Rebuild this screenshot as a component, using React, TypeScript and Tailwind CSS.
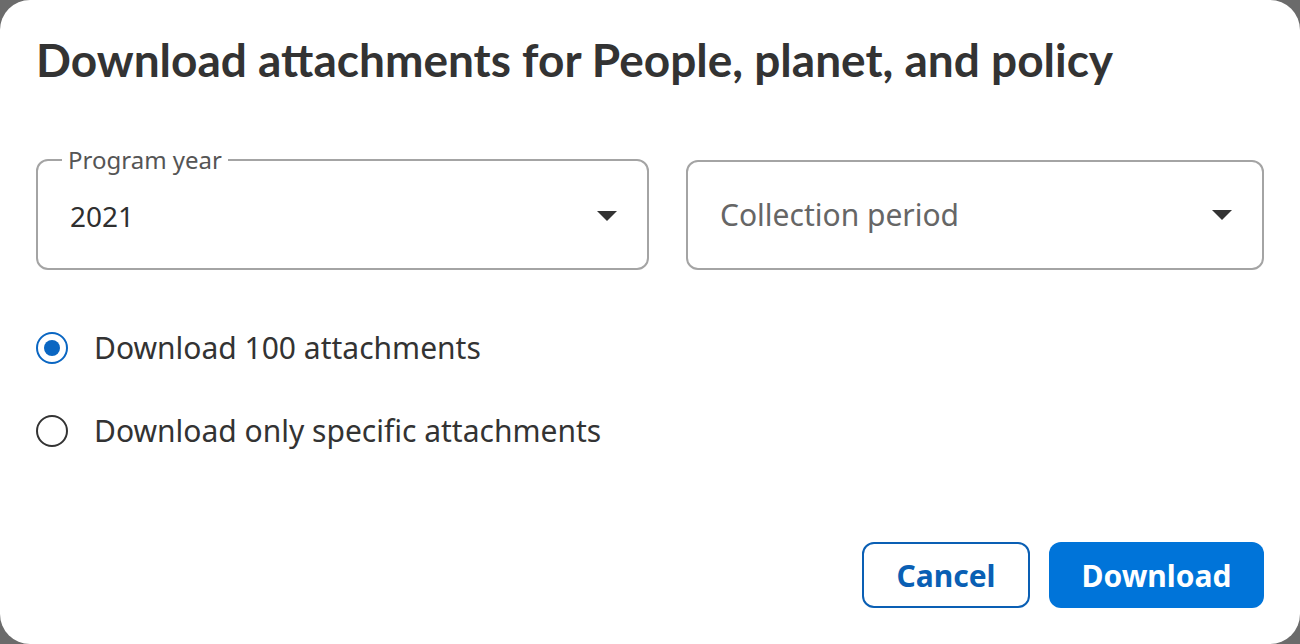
import { useState } from "react";

const font = { fontFamily: "'Noto Sans', Lato, sans-serif" };

function Caret() {
  return (
    <svg width="20" height="10" viewBox="0 0 20 10" className="shrink-0">
      <path d="M0 0 L20 0 L10 10 Z" fill="#333" />
    </svg>
  );
}

function SelectBox({ label, value, placeholder, width }: { label?: string; value?: string; placeholder?: string; width: string }) {
  // with a label the fieldset grows by half the legend above the border line
  const shift = label ? "-mt-[8px]" : "";
  return (
    <fieldset
      className={`${width} ${label ? "h-[122px] -mt-[12px]" : "h-[110px]"} border-2 border-[#a4a4a4] rounded-[12px] pl-[32px] pr-[30px] flex items-center justify-between`}
    >
      {label && <legend className="px-[6px] -ml-[8px] text-[24px] leading-[24px] text-[#555]">{label}</legend>}
      {value ? (
        <span className={`text-[28px] leading-[34px] text-[#2f2f2f] ${shift}`}>{value}</span>
      ) : (
        <span className={`text-[30px] leading-[34px] text-[#666] ${shift}`}>{placeholder}</span>
      )}
      <span className={shift}><Caret /></span>
    </fieldset>
  );
}

function Radio({ checked, label, onClick }: { checked: boolean; label: string; onClick: () => void }) {
  return (
    <button onClick={onClick} className="flex items-center gap-[26px] text-left h-[36px]">
      <span
        className={`w-[32px] h-[32px] rounded-full border-[2.5px] flex items-center justify-center ${checked ? "border-[#0a66c2]" : "border-[#333]"}`}
      >
        {checked && <span className="w-[16px] h-[16px] rounded-full bg-[#0a66c2]" />}
      </span>
      <span className="text-[30px] leading-[36px] text-[#333]">{label}</span>
    </button>
  );
}

export default function App() {
  const [choice, setChoice] = useState("all");

  return (
    <div className="h-[644px] bg-[#6b6b6b]" style={font}>
      <div className="h-full bg-white rounded-[30px] px-[36px] pt-[33px] flex flex-col">
        <h1 className="text-[46px] leading-[54px] font-bold text-[#333]" style={{ fontFamily: "Lato, sans-serif" }}>
          Download attachments for People, planet, and policy
        </h1>

        <div className="flex items-start gap-[37px] mt-[73px]">
          <SelectBox label="Program year" value="2021" width="w-[613px]" />
          <SelectBox placeholder="Collection period" width="w-[578px]" />
        </div>

        <div className="flex flex-col gap-[47px] mt-[60px]">
          <Radio checked={choice === "all"} label="Download 100 attachments" onClick={() => setChoice("all")} />
          <Radio checked={choice === "some"} label="Download only specific attachments" onClick={() => setChoice("some")} />
        </div>

        <div className="mt-auto mb-[36px] flex justify-end gap-[19px]">
          <button className="w-[168px] h-[66px] rounded-[12px] border-2 border-[#0a5fb4] text-[#0a5fb4] text-[30px] font-bold">
            Cancel
          </button>
          <button className="w-[215px] h-[66px] rounded-[12px] bg-[#0074d9] text-white text-[30px] font-bold">
            Download
          </button>
        </div>
      </div>
    </div>
  );
}
